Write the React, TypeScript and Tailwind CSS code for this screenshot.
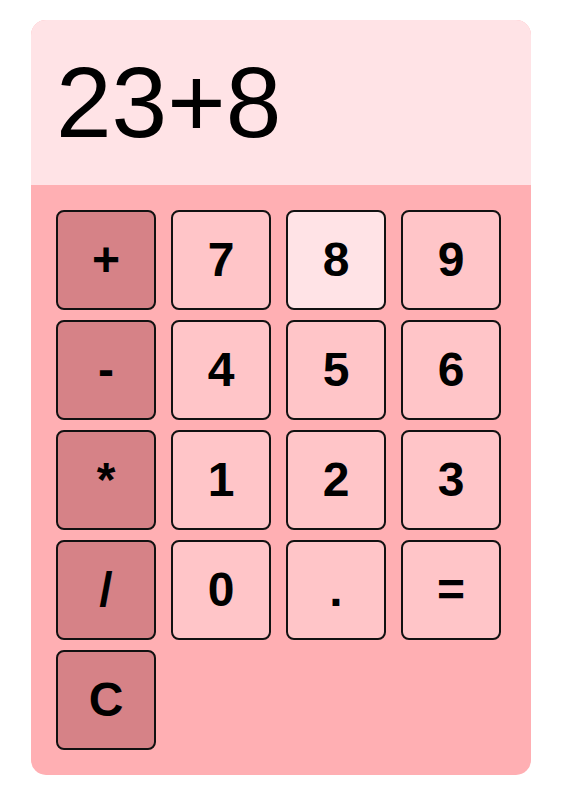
import React from "react";

const rows: { label: string; kind: "op" | "num" | "hi" }[][] = [
  [
    { label: "+", kind: "op" },
    { label: "7", kind: "num" },
    { label: "8", kind: "hi" },
    { label: "9", kind: "num" },
  ],
  [
    { label: "-", kind: "op" },
    { label: "4", kind: "num" },
    { label: "5", kind: "num" },
    { label: "6", kind: "num" },
  ],
  [
    { label: "*", kind: "op" },
    { label: "1", kind: "num" },
    { label: "2", kind: "num" },
    { label: "3", kind: "num" },
  ],
  [
    { label: "/", kind: "op" },
    { label: "0", kind: "num" },
    { label: ".", kind: "num" },
    { label: "=", kind: "num" },
  ],
  [{ label: "C", kind: "op" }],
];

export default function App() {
  return (
    <div className="min-h-[801px] w-full bg-white pt-[20px] pl-[31px]" style={{ fontFamily: '"Liberation Sans", Arial, sans-serif' }}>
      <div className="w-[500px] h-[755px] rounded-[15px] overflow-hidden bg-[#ffafb3] flex flex-col">
        <div className="h-[165px] bg-[#ffe3e6] px-[25px] py-[25px] text-[100px] leading-[115px] text-black">
          23+8
        </div>
        <div className="grid grid-cols-[repeat(4,100px)] gap-x-[15px] gap-y-[10px] p-[25px]">
          {rows.flat().map((b, i) => (
            <button
              key={i}
              className={
                "w-[100px] h-[100px] rounded-[8px] border-2 border-[#111] flex items-center justify-center text-[48px] font-bold text-black " +
                (b.kind === "op" ? "bg-[#d68287]" : b.kind === "hi" ? "bg-[#ffe3e6]" : "bg-[#ffc5c8]")
              }
            >
              {b.label}
            </button>
          ))}
        </div>
      </div>
    </div>
  );
}
